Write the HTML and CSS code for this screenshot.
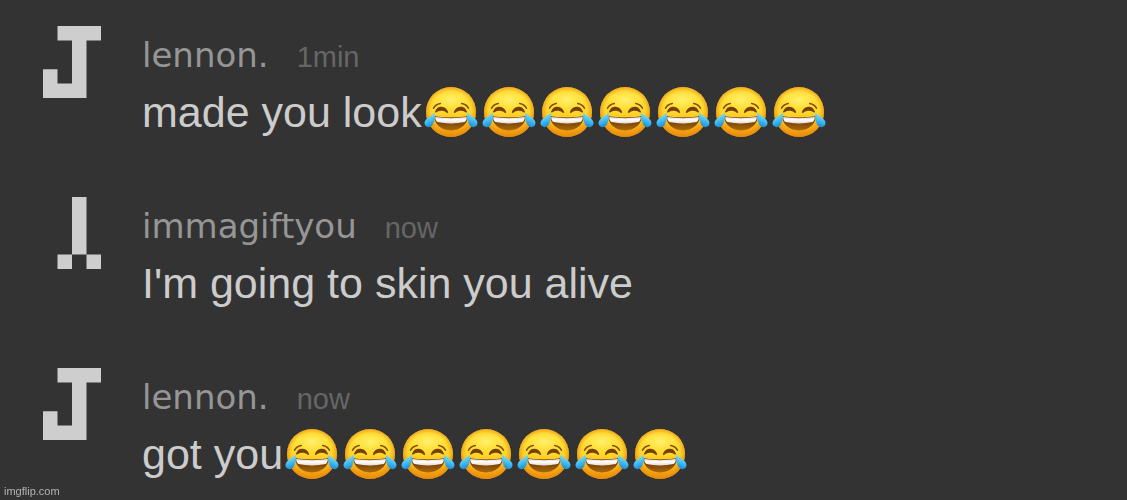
FILE: index.html
```html
<!DOCTYPE html>
<html lang="en">
<head>
<meta charset="utf-8">
<meta name="viewport" content="width=device-width, initial-scale=1">
<title>Chat</title>
<link rel="stylesheet" href="styles.css">
</head>
<body>
<svg class="sprites" aria-hidden="true">
  <defs>
    <linearGradient id="skin" x1="0" y1="0" x2="0" y2="1">
      <stop offset="0" stop-color="#ffc928"/>
      <stop offset=".18" stop-color="#ffe23c"/>
      <stop offset=".5" stop-color="#ffd72c"/>
      <stop offset=".8" stop-color="#f9ae17"/>
      <stop offset="1" stop-color="#e78a0b"/>
    </linearGradient>
    <radialGradient id="rim" cx=".5" cy=".48" r=".52">
      <stop offset=".76" stop-color="#f09a10" stop-opacity="0"/>
      <stop offset="1" stop-color="#e98a0a" stop-opacity=".85"/>
    </radialGradient>
    <radialGradient id="shine" cx=".5" cy=".5" r=".5">
      <stop offset="0" stop-color="#fff47a" stop-opacity=".85"/>
      <stop offset="1" stop-color="#ffec50" stop-opacity="0"/>
    </radialGradient>
    <linearGradient id="mouth" x1="0" y1="0" x2="0" y2="1">
      <stop offset="0" stop-color="#5c2c04"/>
      <stop offset="1" stop-color="#a8690d"/>
    </linearGradient>
    <linearGradient id="teeth" x1="0" y1="0" x2="0" y2="1">
      <stop offset="0" stop-color="#d8d0c8"/>
      <stop offset=".4" stop-color="#ffffff"/>
      <stop offset="1" stop-color="#e4dcd2"/>
    </linearGradient>
    <linearGradient id="tear" x1="0" y1="0" x2=".3" y2="1">
      <stop offset="0" stop-color="#9be6fb"/>
      <stop offset=".5" stop-color="#55c8f4"/>
      <stop offset="1" stop-color="#1a94dd"/>
    </linearGradient>
    <symbol id="joy" viewBox="0 0 58 58">
      <circle cx="29" cy="29" r="25" fill="url(#skin)"/>
      <circle cx="29" cy="29" r="25" fill="url(#rim)"/>
      <ellipse cx="29" cy="17" rx="17" ry="11" fill="url(#shine)"/>
      <g fill="none" stroke="#80490a" stroke-width="1.5" stroke-linecap="round">
        <path d="M11.5 25.3Q13.4 21.3 18.3 20.4"/>
        <path d="M46.5 25.3Q44.6 21.3 39.7 20.4"/>
      </g>
      <g fill="#754006">
        <path d="M13 28.8C14.5 24.6 17.2 23.5 19.7 23.8C23 24.1 25.5 26.5 26.2 29.2C26 30.2 25.1 30 24.3 29.4C21.3 27.3 17.6 27.4 14.5 29.2C13.6 29.8 12.8 29.6 13 28.8Z"/>
        <path d="M45 28.8C43.5 24.6 40.8 23.5 38.3 23.8C35 24.1 32.5 26.5 31.8 29.2C32 30.2 32.9 30 33.7 29.4C36.7 27.3 40.4 27.4 43.5 29.2C44.4 29.8 45.2 29.6 45 28.8Z"/>
      </g>
      <path d="M12.2 34.6C11.9 33.4 12.6 33.1 14 33.4Q29 35.7 44 33.4C45.4 33.1 46.1 33.4 45.8 34.6C44.6 42.5 38 47.4 29 47.4S13.4 42.5 12.2 34.6Z" fill="url(#mouth)"/>
      <path d="M13.1 34.6C13.1 34 13.6 34 14.3 34.1Q29 36.4 43.7 34.1C44.4 34 44.9 34 44.9 34.6C44.6 36.6 43.9 38.2 42.6 39.1Q29 42 15.4 39.1C14.1 38.2 13.4 36.6 13.1 34.6Z" fill="url(#teeth)"/>
      <path id="drop" d="M11.8 30.2C12.9 30 13.3 30.9 13.1 32C12.7 36 12.1 39.6 10.5 42C8.7 44.5 5.6 44.8 3.7 43C1.9 41.2 2.2 38.6 4 36.5C6.1 34.1 9.6 32.6 11.8 30.2Z" fill="url(#tear)"/>
      <use href="#drop" transform="matrix(-1 0 0 1 58 0)"/>
    </symbol>
    <symbol id="avatar-j" viewBox="0 0 4 5" preserveAspectRatio="none">
      <path d="M1 0H4V1H3V5H0V3H1V4H2V1H1Z"/>
    </symbol>
    <symbol id="avatar-y" viewBox="0 0 4 5" preserveAspectRatio="none">
      <path d="M2 0H3V4H2ZM1 4H2V5H1ZM3 4H4V5H3Z"/>
    </symbol>
  </defs>
</svg>

<main class="chat">
  <article class="message">
    <svg class="avatar" aria-hidden="true"><use href="#avatar-j"/></svg>
    <div class="content">
      <header class="meta"><span class="name">lennon.</span><time class="time">1min</time></header>
      <p class="text">made you look<span class="emojis" role="img" aria-label="tears of joy, seven times"><svg class="emoji"><use href="#joy"/></svg><svg class="emoji"><use href="#joy"/></svg><svg class="emoji"><use href="#joy"/></svg><svg class="emoji"><use href="#joy"/></svg><svg class="emoji"><use href="#joy"/></svg><svg class="emoji"><use href="#joy"/></svg><svg class="emoji"><use href="#joy"/></svg></span></p>
    </div>
  </article>

  <article class="message">
    <svg class="avatar" aria-hidden="true"><use href="#avatar-y"/></svg>
    <div class="content">
      <header class="meta"><span class="name">immagiftyou</span><time class="time">now</time></header>
      <p class="text">I'm going to skin you alive</p>
    </div>
  </article>

  <article class="message">
    <svg class="avatar" aria-hidden="true"><use href="#avatar-j"/></svg>
    <div class="content">
      <header class="meta"><span class="name">lennon.</span><time class="time">now</time></header>
      <p class="text">got you<span class="emojis" role="img" aria-label="tears of joy, seven times"><svg class="emoji"><use href="#joy"/></svg><svg class="emoji"><use href="#joy"/></svg><svg class="emoji"><use href="#joy"/></svg><svg class="emoji"><use href="#joy"/></svg><svg class="emoji"><use href="#joy"/></svg><svg class="emoji"><use href="#joy"/></svg><svg class="emoji"><use href="#joy"/></svg></span></p>
    </div>
  </article>
</main>
<footer class="watermark">imgflip.com</footer>
</body>
</html>
```

FILE: styles.css
```css
* {
  box-sizing: border-box;
}

body {
  margin: 0;
  background: #333333;
  font-family: "Liberation Sans", Arial, sans-serif;
}

.sprites {
  position: absolute;
  width: 0;
  height: 0;
}

.chat {
  display: flex;
  flex-direction: column;
  gap: 56px;
  padding: 26px 43px 0;
}

.message {
  display: flex;
  align-items: flex-start;
  gap: 41px;
}

.avatar {
  flex: none;
  width: 58px;
  height: 72px;
  fill: #cecece;
}

.content {
  flex: 1;
  min-width: 0;
  padding-top: 9px;
}

.meta {
  display: flex;
  align-items: baseline;
  gap: 28px;
  margin-bottom: 8px;
  line-height: 40px;
}

.name {
  color: #969696;
  font-family: "DejaVu Sans", Verdana, sans-serif;
  font-size: 34px;
  font-variant-ligatures: none;
}

.time {
  color: #666666;
  font-size: 29px;
  line-height: 32px;
}

.text {
  display: flex;
  align-items: center;
  margin: 0;
  color: #cccccc;
  font-size: 43px;
  line-height: 58px;
}

.emojis {
  display: flex;
}

.emoji {
  width: 58px;
  height: 58px;
}

.watermark {
  position: fixed;
  bottom: 2px;
  left: 4px;
  color: #b4b4b4;
  font-size: 11px;
  line-height: 13px;
}
```
